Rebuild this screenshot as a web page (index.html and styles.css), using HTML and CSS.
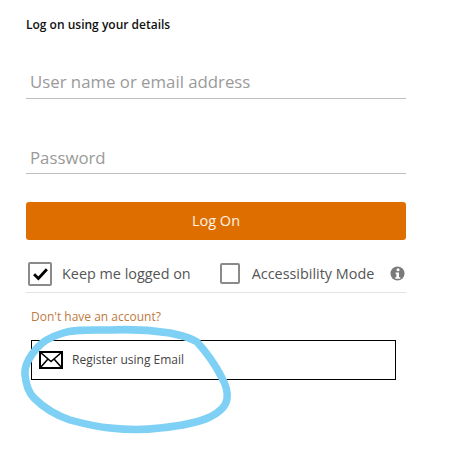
FILE: index.html
```html
<!DOCTYPE html>
<html lang="en">
<head>
<meta charset="utf-8">
<title>Log on</title>
<link rel="stylesheet" href="styles.css">
</head>
<body>
<main class="panel">
  <h1 class="title">Log on using your details</h1>
  <div class="field field-user"><span class="placeholder">User name or email address</span></div>
  <div class="field field-pass"><span class="placeholder">Password</span></div>
  <button class="logon" type="button">Log On</button>
  <div class="options">
    <span class="box box-on">
      <svg viewBox="0 0 24 24" width="17" height="17" class="tick"><path d="M3 13l6 6L21 6" fill="none" stroke="#000" stroke-width="4"/></svg>
    </span>
    <span class="opt-label opt-keep">Keep me logged on</span>
    <span class="box box-off"></span>
    <span class="opt-label opt-access">Accessibility Mode</span>
    <svg class="info" viewBox="0 0 16 16" width="15" height="15">
      <circle cx="8" cy="8" r="7.5" fill="#7a7a7a"/>
      <circle cx="8.6" cy="4" r="1.6" fill="#fff"/>
      <path d="M6 7h3.6v5H11v1.5H5.6V12h1.2V8.500H6z" fill="#fff"/>
    </svg>
  </div>
  <p class="noaccount">Don't have an account?</p>
  <div class="register">
    <svg class="envelope" viewBox="0 0 24 18" width="24" height="18">
      <rect x="1" y="1" width="22" height="16" fill="#fff" stroke="#000" stroke-width="2"/>
      <path d="M1 1l11 9.500L23 1M1 17l8-9M23 17l-8-9" fill="none" stroke="#000" stroke-width="1.600"/>
    </svg>
    <span class="register-text">Register using Email</span>
  </div>
</main>
<svg class="scribble" viewBox="0 0 465 472" width="465" height="472">
  <path d="M197 342C188 336 178 335 170 333C150 330 130 329 110 330C90 330 75 329 63 333C50 337 42 342 37 348C29 357 24 366 25 375C26 385 28 392 34 398C45 409 55 415 70 420C85 424 97 427 110 428C128 430 145 430 160 428C180 426 197 423 210 417C220 412 226 406 227 399C228 392 226 385 222 378C216 366 208 354 197 342" fill="none" stroke="#7fd0f5" stroke-width="7.500" stroke-linecap="round"/>
</svg>
</body>
</html>
```
FILE: styles.css
```css
* { box-sizing: border-box; }
html, body { margin: 0; padding: 0; background: #fff; }
body {
  width: 465px;
  height: 472px;
  overflow: hidden;
  position: relative;
  font-family: "Open Sans", "Liberation Sans", sans-serif;
}
.panel {
  width: 380px;
  margin-left: 26px;
  padding-top: 17px;
  display: flex;
  flex-direction: column;
}
.title {
  margin: 0;
  font-size: 12px;
  line-height: 16px;
  font-weight: 600;
  color: #111;
}
.field {
  border-bottom: 1px solid #bdbdbd;
  padding-left: 4px;
  height: 30px;
  display: flex;
  align-items: center;
}
.field-user { margin-top: 36px; padding-bottom: 3px; }
.field-pass { margin-top: 45px; padding-bottom: 1px; }
.placeholder {
  font-size: 16.8px;
  color: #9a9a9a;
  line-height: 22px;
}
.logon {
  margin-top: 28px;
  height: 38px;
  border: 0;
  border-radius: 3px;
  background: #df6e00;
  color: #fdf3e6;
  font-family: inherit;
  font-size: 14.5px;
  font-weight: 400;
  padding: 0 0 2px;
}
.options {
  margin-top: 22px;
  height: 31px;
  padding-bottom: 7px;
  border-bottom: 1px solid #e2e2e2;
  display: flex;
  align-items: center;
}
.box {
  display: flex;
  align-items: center;
  justify-content: center;
  border: 2px solid #8a8a8a;
  border-radius: 2px;
  background: #fff;
  flex: none;
}
.box-on { width: 24px; height: 24px; margin-left: 2px; }
.box-off { width: 20px; height: 21px; margin-left: 29px; }
.opt-label { font-size: 14.4px; color: #555; line-height: 20px; white-space: nowrap; }
.opt-keep { margin-left: 10px; }
.opt-access { margin-left: 12px; }
.info { margin-left: 16px; flex: none; }
.noaccount {
  margin: 16px 0 0 5px;
  font-size: 12px;
  line-height: 16px;
  color: #bd7a42;
}
.register {
  margin: 15px 0 0 5px;
  width: 365px;
  height: 40px;
  border: 1px solid #000;
  padding-left: 7px;
  display: flex;
  align-items: center;
}
.envelope { flex: none; }
.register-text {
  margin-left: 9px;
  font-size: 12px;
  color: #444;
  line-height: 16px;
}
.scribble {
  position: absolute;
  left: 0;
  top: 0;
  pointer-events: none;
}
```
